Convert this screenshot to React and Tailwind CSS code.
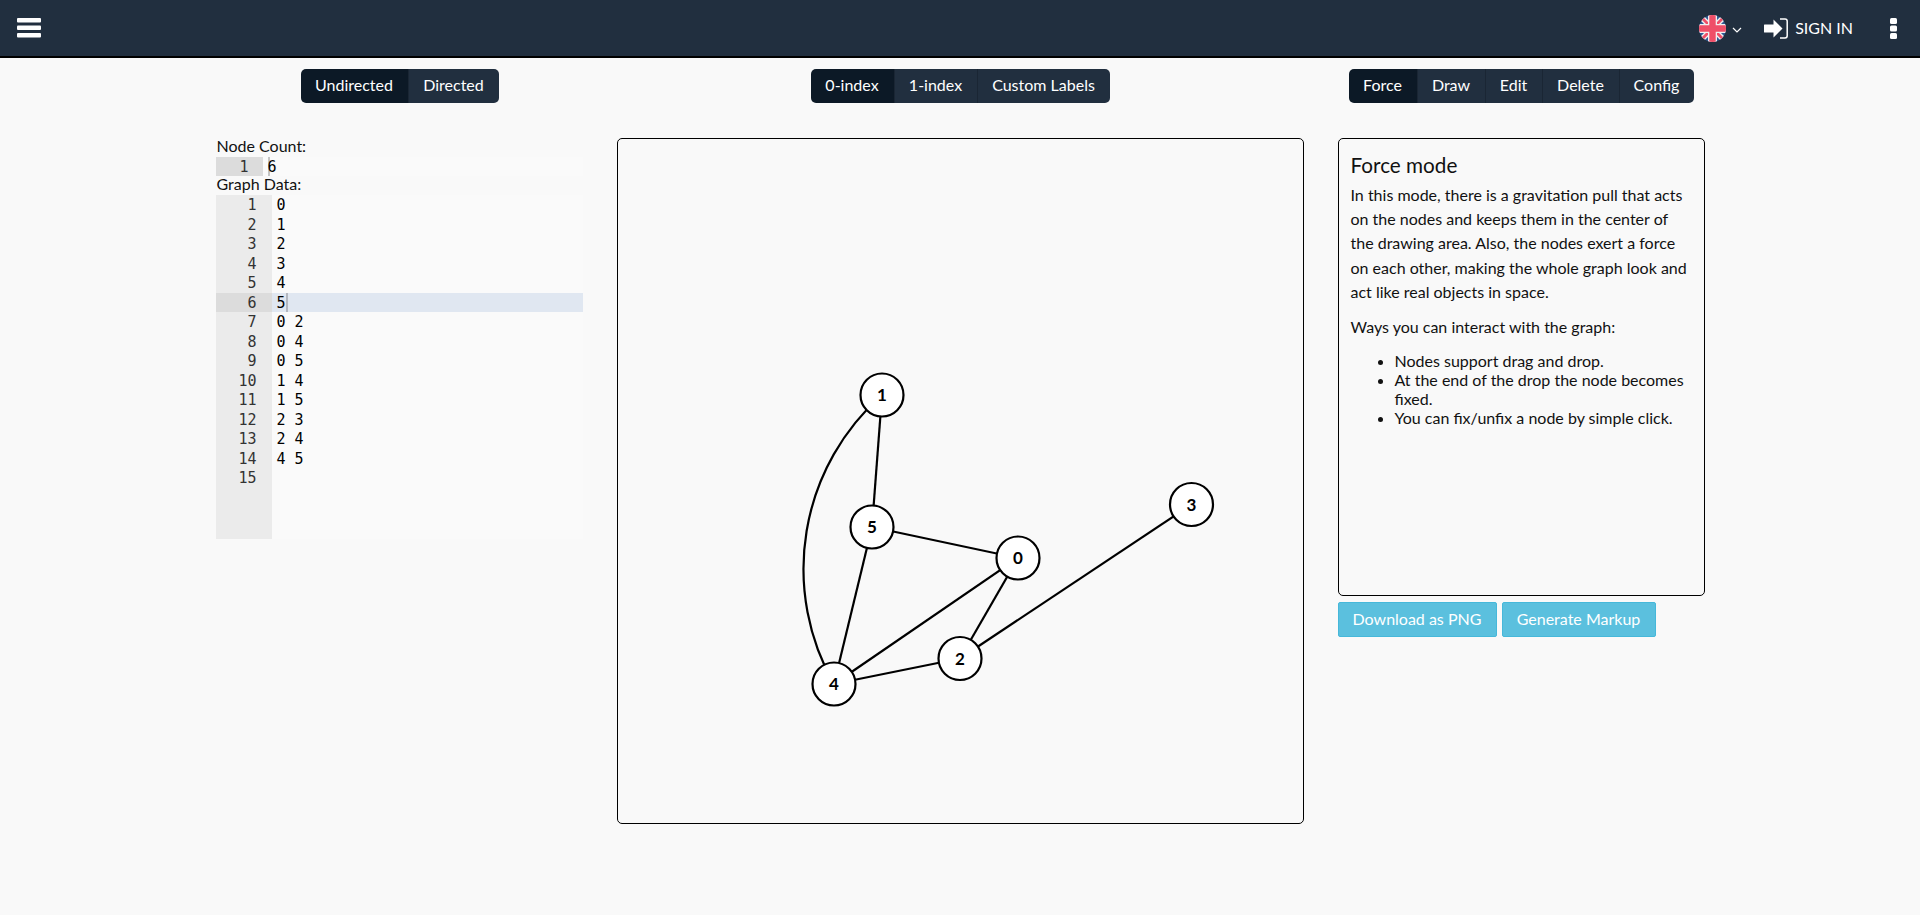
import React from "react";

function Group({ items, className = "" }) {
  return (
    <div className={"inline-flex h-[34px] overflow-hidden rounded-[5px] text-[16px] text-white " + className}>
      {items.map((t, i) => (
        <div
          key={t[0]}
          className={
            "flex items-center justify-center pb-[2px] " +
            (i === 0 ? "bg-[#0c1926]" : "bg-[#212f3f]") +
            (i > 0 ? " border-l border-[#1a2634]" : "")
          }
          style={{ width: t[1] }}
        >
          {t[0]}
        </div>
      ))}
    </div>
  );
}

const lines = ["0", "1", "2", "3", "4", "5", "0 2", "0 4", "0 5", "1 4", "1 5", "2 3", "2 4", "4 5", ""];

const nodes = [
  ["0", 400, 419],
  ["1", 264, 256],
  ["2", 342, 519.5],
  ["3", 573.5, 365.5],
  ["4", 216, 545],
  ["5", 254, 388],
];
const edges = [
  [0, 2],
  [0, 4],
  [0, 5],
  [1, 5],
  [2, 3],
  [2, 4],
  [4, 5],
];

function Flag() {
  return (
    <svg width="27" height="27" viewBox="0 0 27 27" className="block">
      <defs>
        <clipPath id="flagc">
          <circle cx="13.5" cy="13.5" r="13.5" />
        </clipPath>
      </defs>
      <g clipPath="url(#flagc)">
        <rect width="27" height="27" fill="#2f5a94" />
        <path d="M0 0L27 27M27 0L0 27" stroke="#f0f0f0" strokeWidth="5.5" />
        <path d="M0 0L27 27M27 0L0 27" stroke="#ef4f68" strokeWidth="2.8" />
        <path d="M13.5 0V27M0 13.5H27" stroke="#f0f0f0" strokeWidth="9" />
        <path d="M13.5 0V27M0 13.5H27" stroke="#ef4f68" strokeWidth="6.4" />
      </g>
    </svg>
  );
}

function Bars() {
  return (
    <svg width="24" height="20" viewBox="0 0 24 20" fill="#fff" className="block">
      <rect x="0" y="0" width="24" height="4.5" rx="1" />
      <rect x="0" y="7.5" width="24" height="4.5" rx="1" />
      <rect x="0" y="15" width="24" height="4.5" rx="1" />
    </svg>
  );
}

function SignIn() {
  return (
    <svg width="24" height="21" viewBox="0 0 24 21" className="block">
      <path d="M0.5 6.5H9.5V1.5L18.5 10.5L9.5 19.5V14.5H0.5Q0 14.5 0 14V7Q0 6.5 0.5 6.5Z" fill="#fff" />
      <path d="M16 1H21Q23.2 1 23.2 3.2V17.8Q23.2 20 21 20H16" fill="none" stroke="#fff" strokeWidth="1.5" />
    </svg>
  );
}

function Kebab() {
  return (
    <svg width="7" height="21" viewBox="0 0 7 21" fill="#fff" className="block">
      <rect x="0" y="0" width="7" height="6" rx="1.5" />
      <rect x="0" y="7.5" width="7" height="6" rx="1.5" />
      <rect x="0" y="15" width="7" height="6" rx="1.5" />
    </svg>
  );
}

export default function App() {
  return (
    <div className="min-h-[915px] bg-[#f9f9f9] font-['Lato',sans-serif] text-[#111]">
      <header className="flex h-[58px] items-center border-b-2 border-black bg-[#212f3f] pl-[17px] pr-[23px] text-white">
        <Bars />
        <div className="ml-auto flex items-center">
          <Flag />
          <svg width="10" height="6" viewBox="0 0 10 6" className="ml-[6px] mt-[3px]" fill="none" stroke="#fff" strokeWidth="1.2">
            <path d="M1 1l4 4 4-4" />
          </svg>
          <div className="ml-[22px]">
            <SignIn />
          </div>
          <span className="ml-[7px] text-[16px] leading-none">SIGN IN</span>
          <div className="ml-[37px]">
            <Kebab />
          </div>
        </div>
      </header>

      <main className="mx-auto grid w-[1489px] grid-cols-[367px_687px_367px] gap-x-[34px]">
        <div className="col-start-1 flex justify-center pl-[1px] pt-[11px]">
          <Group items={[["Undirected", 107], ["Directed", 91]]} />
        </div>
        <div className="flex justify-center pt-[11px]">
          <Group items={[["0-index", 83], ["1-index", 83], ["Custom Labels", 133]]} />
        </div>
        <div className="flex justify-center pt-[11px]">
          <Group items={[["Force", 68], ["Draw", 68], ["Edit", 57], ["Delete", 77], ["Config", 75]]} />
        </div>

        <section className="mt-[35px] text-[16px]">
          <div className="h-[19px] pl-[1px] leading-[15px]">Node Count:</div>
          <div className="flex h-[19px] bg-[#fafafa] font-['DejaVu_Sans_Mono',monospace] text-[15px] leading-[20.5px]">
            <div className="w-[47px] bg-[#dcdcdc] pr-[14px] text-right text-[#333]">1</div>
            <div className="ml-[5px] border-l-2 border-[#c4c4c4] text-black">
              <span className="-ml-[2px] block">6</span>
            </div>
          </div>
          <div className="h-[19px] pl-[1px] leading-[15px]">Graph Data:</div>
          <div className="flex min-h-[344px] bg-[#fafafa] font-['DejaVu_Sans_Mono',monospace] text-[15px] leading-[21.5px]">
            <div className="w-[56px] shrink-0 bg-[#ebebeb] text-right text-[#333]">
              {lines.map((_, i) => (
                <div key={i} className={"h-[19.5px] pr-[15px] " + (i === 5 ? "bg-[#dcdcdc]" : "")}>
                  {i + 1}
                </div>
              ))}
            </div>
            <div className="flex-1 text-black">
              {lines.map((l, i) => (
                <div key={i} className={"h-[19.5px] whitespace-pre pl-[5px] " + (i === 5 ? "bg-[#e0e7f1]" : "")}>
                  {l}
                  {i === 5 && <span className="inline-block h-[19.5px] w-[2px] align-top bg-[#b4b8c0]" />}
                </div>
              ))}
            </div>
          </div>
        </section>

        <section className="mt-[35px] h-[686px] rounded-[5px] border border-black">
          <svg width="685" height="684" viewBox="0 0 685 684" className="block font-['Lato',sans-serif]">
            <path d="M264 256A232 232 0 0 0 216 545" fill="none" stroke="#000" strokeWidth="2.2" />
            {edges.map(([a, b], i) => (
              <line key={i} x1={nodes[a][1]} y1={nodes[a][2]} x2={nodes[b][1]} y2={nodes[b][2]} stroke="#000" strokeWidth="2.2" />
            ))}
            {nodes.map(([t, x, y]) => (
              <g key={t}>
                <circle cx={x} cy={y} r="21.5" fill="#fff" stroke="#000" strokeWidth="2.2" />
                <text x={x} y={y + 6} textAnchor="middle" fontSize="17" fontWeight="700" fill="#000">
                  {t}
                </text>
              </g>
            ))}
          </svg>
        </section>

        <section className="mt-[35px]">
          <div className="h-[458px] rounded-[5px] border border-black px-[12px] pt-[14px] text-[16px]">
            <h2 className="text-[20.7px] leading-[24px]">Force mode</h2>
            <p className="mt-[6px] leading-[24.2px]">
              In this mode, there is a gravitation pull that acts on the nodes and keeps them in the center of the drawing area. Also, the nodes exert a force on each other, making the whole graph look and act like real objects in space.
            </p>
            <p className="mt-[11px] leading-[24px]">Ways you can interact with the graph:</p>
            <ul className="mt-[12px] list-disc pl-[44px] leading-[19px]">
              <li>Nodes support drag and drop.</li>
              <li>At the end of the drop the node becomes fixed.</li>
              <li>You can fix/unfix a node by simple click.</li>
            </ul>
          </div>
          <div className="mt-[6px] flex gap-[5px] text-[16px] text-white">
            <div className="flex h-[35px] w-[159px] items-center justify-center rounded-[2px] border border-[#46b8da] bg-[#5bc0de] pb-[2px]">Download as PNG</div>
            <div className="flex h-[35px] w-[154px] items-center justify-center rounded-[2px] border border-[#46b8da] bg-[#5bc0de] pb-[2px]">Generate Markup</div>
          </div>
        </section>
      </main>
    </div>
  );
}
